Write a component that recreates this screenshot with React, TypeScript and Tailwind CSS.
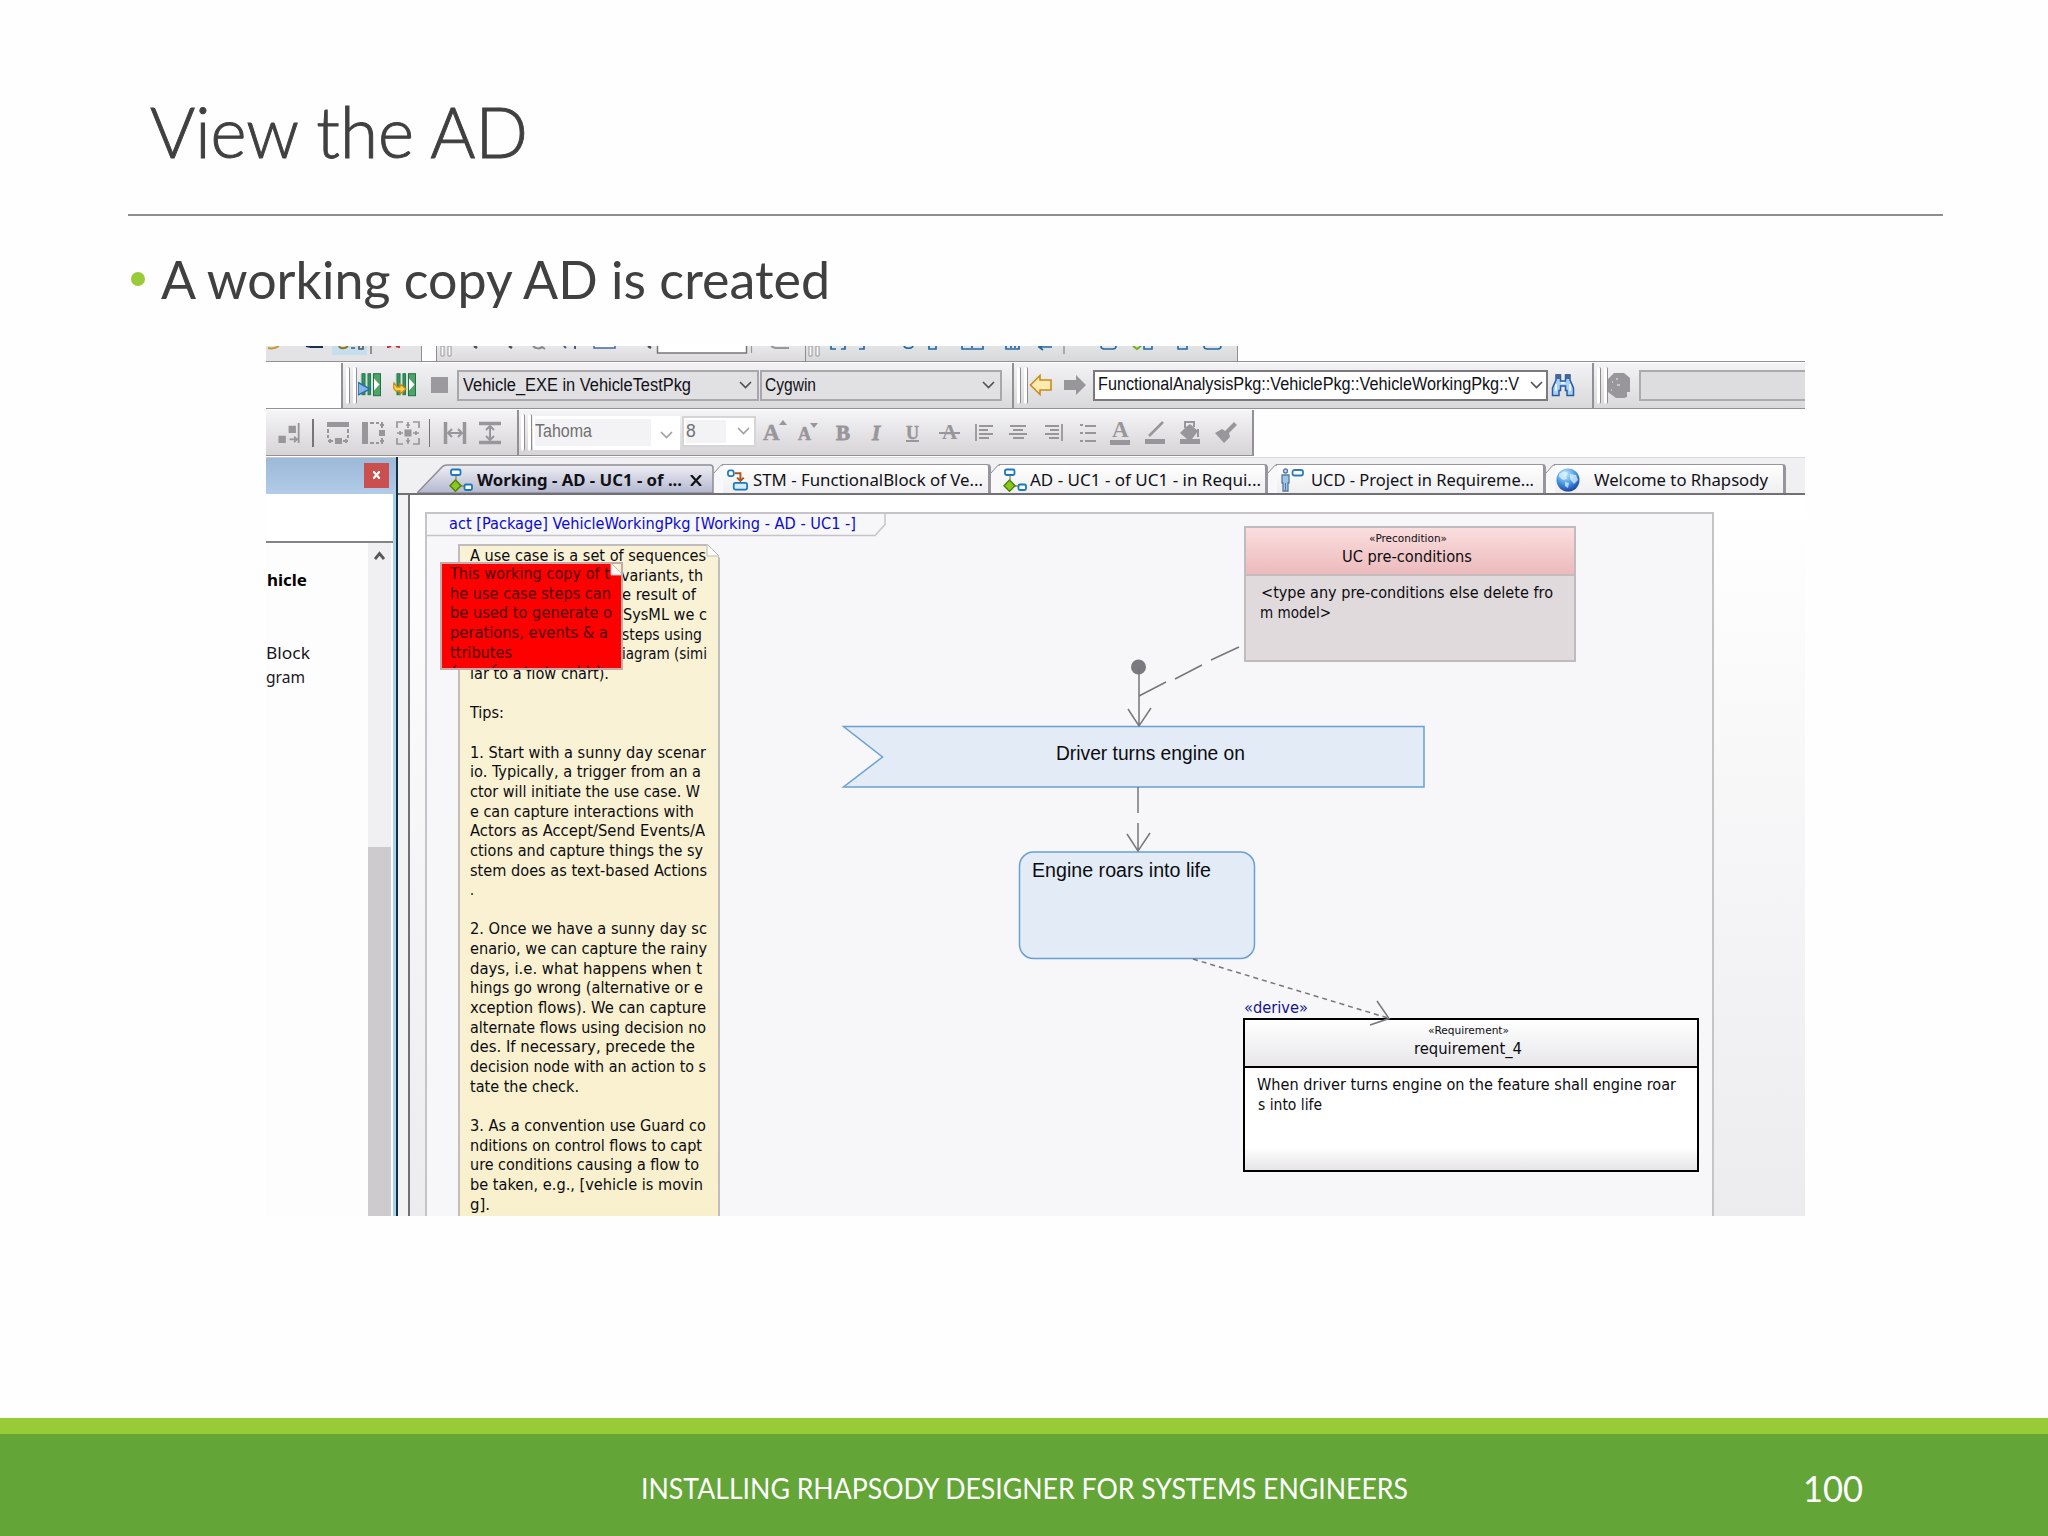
import React, { useLayoutEffect, useRef, useState } from 'react';

type FitProps = { w: number; className?: string; children: string };

// Single line of text stretched to an exact width
function Fit({ w, className = '', children }: FitProps) {
  const ref = useRef<HTMLSpanElement>(null);
  const [scale, setScale] = useState(1);

  useLayoutEffect(() => {
    if (ref.current) setScale(w / parseFloat(getComputedStyle(ref.current).width));
  }, [w, children]);

  return (
    <span
      ref={ref}
      className={`inline-block shrink-0 origin-left whitespace-pre ${className}`}
      style={{ transform: `scaleX(${scale})` }}
    >
      {children}
    </span>
  );
}

const tahoma = 'font-["DejaVu_Sans_Condensed","DejaVu_Sans",sans-serif]';
const segoe = 'font-["Noto_Sans",sans-serif]';
const arial = 'font-["Liberation_Sans",sans-serif]';

function Grip() {
  return (
    <div className="flex h-[37px] w-[12px] shrink-0 gap-[3px]">
      <div className="w-[4px] rounded-sm border-r border-[#8e8c90] bg-white" />
      <div className="w-[4px] rounded-sm border-r border-[#8e8c90] bg-white" />
    </div>
  );
}

function Chevron({ className = 'text-[#505052]' }: { className?: string }) {
  return (
    <svg className={`h-[8px] w-[13px] shrink-0 ${className}`} viewBox="0 0 13 8" fill="none" stroke="currentColor" strokeWidth="1.6">
      <path d="M1 1l5.5 5.5L12 1" />
    </svg>
  );
}

function Icon({ className, box = '0 0 24 24', children }: { className: string; box?: string; children: React.ReactNode }) {
  return (
    <svg className={`shrink-0 text-[#98969a] ${className}`} viewBox={box} fill="none" stroke="currentColor" strokeWidth="2">
      {children}
    </svg>
  );
}

function ActivityIcon({ className }: { className: string }) {
  return (
    <Icon className={className}>
      <path d="M7 7v5M12 18h5" stroke="#8d8b60" strokeWidth="1.3" />
      <rect x="2" y="1.5" width="9.5" height="5.5" rx="1.5" fill="#fff" stroke="#1a78bb" strokeWidth="1.8" />
      <path d="M6.5 12l5.5 5.7-5.5 5.5L1 17.7z" fill="#8cc81c" stroke="#4d8507" strokeWidth="1.5" />
      <rect x="15.5" y="16.5" width="7.5" height="5.5" rx="1.5" fill="#fff" stroke="#1a78bb" strokeWidth="1.8" />
    </Icon>
  );
}

function BuildBars() {
  return (
    <>
      <path d="M2 1h20v21H2z" fill="#cfe6d8" stroke="none" />
      <rect x="4" y=".7" width="3" height="21" fill="#3a8f66" stroke="#2a7a52" strokeWidth="1" />
      <rect x="10" y=".7" width="2.5" height="21" fill="#3a8f66" stroke="#2a7a52" strokeWidth="1" />
      <rect x="15.5" y=".7" width="7" height="22" fill="#4ea365" stroke="#23704a" strokeWidth="1" />
      <path d="M16 5.500l5.500 6-5.500 6z" fill="#fff" stroke="none" />
    </>
  );
}

/* Row cut off by the top edge: only the icon bottoms show */
function CutToolbar() {
  return (
    <div className="flex h-[15px] shrink-0">
      <div className="flex h-full w-[156px] shrink-0 border-r border-[#8e8c90] bg-[#e3e2e4]">
        <Icon className="h-[15px] w-[155px]" box="0 0 155 15">
          <rect x="66" y="-2" width="35" height="11" fill="#c5dff0" stroke="none" />
          <path d="M2 2c4 1 8 0 11-2" stroke="#c59b28" strokeWidth="2" />
          <path d="M40 0l5 1h12" stroke="#16324f" strokeWidth="1.800" />
          <path d="M73 0c1 3 6 3 9 0" stroke="#987118" strokeWidth="2" />
          <path d="M85 2h4m4-2v3h4V0" stroke="#555" strokeWidth="1.600" />
          <path d="M105 0v8" stroke="#77757a" strokeWidth="1.500" />
          <path d="M122 0v2M125 0l-2 1M133 0v2M130 0l2 1" stroke="#cf3438" strokeWidth="2" />
        </Icon>
      </div>
      <div className="ml-[14px] h-full w-[369px] shrink-0 border-l border-[#8e8c90] bg-linear-to-b from-[#e8e7e9] to-[#dcdadd]">
        <Icon className="h-[15px] w-[368px]" box="0 0 368 15">
          <path d="M4 0h3v10H4zM11 0h3v10h-3z" fill="#fff" stroke="#98969a" strokeWidth="1" />
          <path d="M37 0l3 2M72 0l3 2M211 0l3 2" stroke="#4e4d50" strokeWidth="2.500" />
          <path d="M96 0c3 3 7 3 9 1l3 2" stroke="#88868a" />
          <path d="M127 0l2 2M138 0v3" stroke="#44607d" />
          <rect x="157" y="-4" width="21" height="6" fill="#fff" stroke="#4068a8" strokeWidth="1.500" />
          <rect x="220.500" y="-4" width="89" height="11" fill="#fff" stroke="#77757a" strokeWidth="1.500" />
          <path d="M314.500 0v7" strokeWidth="1.200" />
          <path d="M338 2h14M334 0l4 2" />
        </Icon>
      </div>
      <div className="h-full w-[433px] shrink-0 border-x border-[#8e8c90] bg-linear-to-b from-[#e2e4e5] to-[#d6d8da]">
        <Icon className="h-[15px] w-[431px]" box="0 0 431 15">
          <path d="M3 0h3v10H3zM10 0h3v10h-3z" fill="#fff" stroke="#98969a" strokeWidth="1" />
          <g stroke="#2469a3">
            <path d="M25 0v3h5M35 3h4V0M53 3h5V0M98 0c1 3 8 3 9 0M123 0v3h7V0M156 0v3h21V0M166 0v2M200 0v3h13V0M205 0v2M209 0v2M232 1h14m-10-2l-3 2 4 3" strokeWidth="1.700" />
            <path d="M295 0c0 3 2 3 3 3h9c2 0 3-1 3-3M338 0v3h8V0M372 0v3h9V0M398 0c0 3 2 3 3 3h11c2 0 3-1 3-3" strokeWidth="1.600" />
          </g>
          <path d="M327 0l4 3 4-3" stroke="#75ad21" />
          <path d="M258 0v8" strokeWidth="1.500" />
        </Icon>
      </div>
    </div>
  );
}

function BuildToolbar() {
  return (
    <div className="flex h-[48px] shrink-0 border-y-[1.500px] border-[#929094] pt-px">
      <div className={`ml-[75px] flex w-[671px] shrink-0 items-center border-l-2 border-[#929094] bg-linear-to-b from-[#f3f2f4] to-[#d9d8da] pb-px pl-[3px] text-[18px] text-[#111118] ${arial}`}>
        <Grip />
        <Icon className="h-[24px] w-[24px]">
          <BuildBars />
          <path d="M0 9.500l12 6.500-12 6z" fill="#86b6e4" stroke="#286eaa" strokeWidth="1.500" />
        </Icon>
        <Icon className="ml-[11px] h-[24px] w-[24px]">
          <BuildBars />
          <path d="M1 10l3 4h3v-3l6 5-6 5v-3H3c-3-2-3-5-2-8z" fill="#ffd44a" stroke="#cd8b13" strokeWidth="1.300" />
        </Icon>
        <div className="ml-[14px] h-[16px] w-[17px] shrink-0 bg-[#9b999d]" />
        <div className="ml-[9px] flex h-[31px] w-[302px] shrink-0 items-center justify-between border-2 border-[#a9a7ab] bg-[#e1e0e2] pr-[5px] pl-[4px]">
          <Fit w={228}>Vehicle_EXE in VehicleTestPkg</Fit>
          <Chevron />
        </div>
        <div className="ml-px flex h-[31px] w-[242px] shrink-0 items-center justify-between border-2 border-[#a9a7ab] bg-[#e1e0e2] pr-[5px] pl-[3px]">
          <Fit w={51}>Cygwin</Fit>
          <Chevron />
        </div>
      </div>
      <div className={`flex w-[580px] shrink-0 items-center border-l-2 border-[#929094] bg-linear-to-b from-[#f3f2f4] to-[#d9d8da] pb-px pl-[3px] text-[18px] text-[#111118] ${arial}`}>
        <Grip />
        <Icon className="h-[22px] w-[24px]" box="0 0 24 22">
          <path d="M1.500 11L11 1.500V6h11v10H11v4.500z" fill="#ffeab0" stroke="#c98a1c" strokeWidth="1.600" />
        </Icon>
        <Icon className="ml-[10px] h-[22px] w-[24px]" box="0 0 24 22">
          <path d="M23 11L13 1v5H1v10h12v5z" fill="currentColor" stroke="none" />
        </Icon>
        <div className="ml-[6px] flex h-[31px] w-[455px] shrink-0 items-center border-2 border-[#7b797d] bg-white pl-[3px]">
          <div className="h-[29px] w-[432px] shrink-0">
            <Fit w={421}>FunctionalAnalysisPkg::VehiclePkg::VehicleWorkingPkg::V</Fit>
          </div>
          <Chevron />
        </div>
        <Icon className="ml-[3px] h-[24px] w-[24px]">
          <path d="M5 2h4.500v6h5V2H19v5l3.500 8v7.500H16v-5h-1.500V13h-5v4.500H8v5H1.500V15L5 7z" fill="#a9d0f8" stroke="#2b5b9f" strokeWidth="1.500" />
          <path d="M5 1h4.500v5H5zM14.500 1H19v5h-4.500z" fill="#456890" stroke="none" />
          <path d="M5 11v7M19 11v7M10 10h4" stroke="#e8f3ff" />
        </Icon>
      </div>
      <div className="flex w-[213px] shrink-0 items-center border-l-2 border-[#929094] bg-linear-to-b from-[#f3f2f4] to-[#d9d8da] pb-px pl-[3px]">
        <Grip />
        <Icon className="-ml-px h-[25px] w-[22px]" box="0 0 22 25">
          <path d="M6 0h10l6 5v14h-3v5l-3 1H8l-8-6V6z" fill="currentColor" stroke="none" />
          <path d="M8 6h2M4 9h1M9 12h3M3 17h1" stroke="#d6d4d8" strokeWidth="1.500" />
        </Icon>
        <div className="ml-[9px] h-[31px] flex-1 border-2 border-r-0 border-[#acaaae] bg-[#dddcde]" />
      </div>
    </div>
  );
}

function FormatToolbar() {
  return (
    <div className="mt-px flex h-[46px] w-[988px] shrink-0 items-center border-r-2 border-b-[1.500px] border-[#929094] bg-linear-to-b from-[#f5f4f6] to-[#d6d4d7]">
      <Icon className="ml-[12px] h-[22px] w-[23px]">
        <path d="M22 1v22M12 19h9M17 16l3 3-3 3" />
        <path d="M11 4h8v8h-8zM0 15h8v8H0z" fill="currentColor" stroke="none" />
      </Icon>
      <div className="ml-[11px] h-[28px] w-[1.500px] bg-[#77757a]" />
      <Icon className="ml-[12px] h-[24px] w-[24px]">
        <path d="M1 1h22v5H1zM9 17h7v6H9z" fill="currentColor" stroke="none" />
        <path d="M2 8v4M2 14v3M22 8v4M22 14v3M2 20h5M17 20h5M4 18v4M20 18v4" />
      </Icon>
      <Icon className="ml-[11px] h-[24px] w-[24px]">
        <path d="M1 1h6v22H1zM18 9h6v6h-6z" fill="currentColor" stroke="none" />
        <path d="M9 2h4M15 2h3M9 22h4M15 22h3M21 1v6M19 4h4M21 17v6M19 20h4" />
      </Icon>
      <Icon className="ml-[11px] h-[24px] w-[24px]">
        <path d="M8.500 8.500h7v7h-7z" fill="currentColor" stroke="none" />
        <path d="M1 7V1h6M17 1h6v6M1 17v6h6M17 23h6v-6M12 1v6M12 17v6M1 12h6M17 12h6M10 4h4M10 20h4M4 10v4M20 10v4" strokeWidth="1.700" />
      </Icon>
      <div className="ml-[9px] h-[28px] w-[1.500px] bg-[#77757a]" />
      <Icon className="ml-[13px] h-[24px] w-[24px]">
        <path d="M2.500 1v22M21.500 1v22" strokeWidth="3.500" />
        <path d="M5 12h14M9 8l-4 4 4 4M15 8l4 4-4 4" />
      </Icon>
      <Icon className="ml-[11px] h-[24px] w-[24px]">
        <path d="M1 2.500h22M1 21.500h22" strokeWidth="3.500" />
        <path d="M12 5v14M8 9l4-4 4 4M8 15l4 4 4-4" />
      </Icon>
      <div className={`ml-[15px] flex h-full shrink-0 items-center border-l-2 border-[#929094] pl-[2px] text-[17.500px] text-[#717073] ${arial}`}>
        <Grip />
        <div className="flex h-[34px] w-[147px] shrink-0 items-center justify-between border-2 border-white bg-white pr-[5px]">
          <div className="h-[27px] w-[116px] shrink-0 bg-[#f3f2f4] leading-[24px]">
            <Fit w={57}>Tahoma</Fit>
          </div>
          <Chevron className="mt-[5px] text-[#a09ea2]" />
        </div>
        <div className="mb-[3px] ml-[2px] flex h-[31px] w-[74px] shrink-0 items-center justify-between border-2 border-[#d6d4d7] bg-white pr-[4px] pl-[2px]">
          <div className="h-[23px] w-[40px] bg-[#f3f2f4] leading-[23px]">8</div>
          <Chevron className="text-[#a09ea2]" />
        </div>
      </div>
      <div className="ml-[7px] flex shrink-0 items-center font-['Liberation_Serif',serif] leading-none font-bold text-[#98969a]">
        <span className="relative w-[35px] text-[23px] [-webkit-text-stroke:0.5px]">
          A
          <svg className="absolute top-[-1px] left-[16px] h-[5px] w-[8px]" viewBox="0 0 8 5" fill="currentColor"><path d="M4 0l4 5H0z" /></svg>
        </span>
        <span className="relative w-[38px] pt-[2px] text-[18px] [-webkit-text-stroke:0.5px]">
          A
          <svg className="absolute top-0 left-[12px] h-[5px] w-[8px]" viewBox="0 0 8 5" fill="currentColor"><path d="M0 0h8L4 5z" /></svg>
        </span>
        <span className="w-[36px] pt-px text-[21px] [-webkit-text-stroke:0.8px]">B</span>
        <span className="w-[34px] pt-px text-[21px] italic [-webkit-text-stroke:0.8px]">I</span>
        <span className="w-[33px] text-[18px] underline decoration-2 underline-offset-1 [-webkit-text-stroke:0.5px]">U</span>
        <span className="relative w-[36px] pl-[3px] text-[21px]">
          A
          <span className="absolute top-[10px] left-0 h-[2px] w-[21px] bg-[#98969a]" />
        </span>
      </div>
      <Icon className="h-[17px] w-[19px]" box="0 0 19 17">
        <path d="M1 0v17M4 2h14M4 6h9M4 10h14M4 14h10" strokeWidth="1.800" />
      </Icon>
      <Icon className="ml-[15px] h-[17px] w-[18px]" box="0 0 18 17">
        <path d="M1 2h16M4 6h10M0 10h18M4 14h11" strokeWidth="1.800" />
      </Icon>
      <Icon className="ml-[17px] h-[17px] w-[19px]" box="0 0 19 17">
        <path d="M18 0v17M1 2h14M6 6h9M1 10h14M5 14h10" strokeWidth="1.800" />
      </Icon>
      <Icon className="ml-[17px] h-[20px] w-[16px]" box="0 0 16 20">
        <path d="M0 2h3M0 10h3M0 18h3M5 3h11M5 10h11M5 18h11" strokeWidth="1.800" />
      </Icon>
      <span className="ml-[14px] h-[24px] w-[20px] shrink-0 border-b-[5px] border-[#98969a] pl-[2px] font-['Liberation_Serif',serif] text-[23px] leading-[18px] font-bold text-[#98969a]">A</span>
      <Icon className="ml-[15px] h-[23px] w-[20px]" box="0 0 20 23">
        <path d="M0 18h20v5H0z" fill="currentColor" stroke="none" />
        <path d="M4 15L18 1" strokeWidth="2.500" />
      </Icon>
      <Icon className="ml-[15px] h-[23px] w-[21px]" box="0 0 21 23">
        <path d="M0 18h20v5H0zM7 18L0 12l6-6 4-3 8 7-6 8z" fill="currentColor" stroke="none" />
        <path d="M5 7V1h9v5M18 8v8" />
      </Icon>
      <Icon className="ml-[14px] h-[23px] w-[23px]" box="0 0 23 23">
        <path d="M0 12l7-4 3 2 9-9 3 3-8 8 1 4-6 6z" fill="currentColor" stroke="none" />
      </Icon>
    </div>
  );
}

const tabs = [
  { icon: 'state', gap: 'w-[277px]', label: 'STM - FunctionalBlock of Ve...', w: 230, inner: 'pl-[13px]', text: 'ml-[3px]' },
  { icon: 'activity', gap: 'w-[277px]', label: 'AD - UC1 - of UC1 - in Requi...', w: 231, inner: 'pl-[12px]', text: 'ml-[3px]' },
  { icon: 'usecase', gap: 'w-[278px]', label: 'UCD - Project in Requireme...', w: 223, inner: 'pl-[12px]', text: 'ml-[7px]' },
  { icon: 'globe', gap: 'w-[240px]', label: 'Welcome to Rhapsody', w: 174, inner: 'pl-[10px]', text: 'ml-[14px]' },
];

function TabIcon({ name }: { name: string }) {
  if (name === 'activity') return <ActivityIcon className="h-[24px] w-[24px]" />;
  if (name === 'state')
    return (
      <Icon className="h-[24px] w-[23px]">
        <path d="M8 5h6v8M10.500 9.500L14 13l3.500-3.500" stroke="#a9551d" />
        <rect x="1" y="2" width="6" height="6" rx="2" fill="#fff" stroke="#1a78bb" strokeWidth="1.800" />
        <rect x="7" y="15" width="14" height="7" rx="2" fill="#d6ecfb" stroke="#1a78bb" strokeWidth="1.800" />
      </Icon>
    );
  if (name === 'usecase')
    return (
      <Icon className="h-[24px] w-[24px]">
        <circle cx="5.500" cy="3" r="2" fill="#c4ddf2" stroke="#57799c" strokeWidth="1.300" />
        <path d="M2 7h7v8H8v8H3v-8H2z" fill="#9fc6e8" stroke="#57799c" strokeWidth="1.300" />
        <path d="M5.500 15v7" stroke="#57799c" strokeWidth="1" />
        <rect x="12.500" y="2" width="10.500" height="5.500" rx="2" fill="#fff" stroke="#3179bb" strokeWidth="1.800" />
      </Icon>
    );
  return (
    <Icon className="h-[24px] w-[24px]">
      <defs>
        <radialGradient id="globe" cx=".4" cy=".25" r=".8">
          <stop offset="0" stopColor="#c5eafc" />
          <stop offset=".5" stopColor="#4f9fe2" />
          <stop offset="1" stopColor="#1238a3" />
        </radialGradient>
      </defs>
      <circle cx="12" cy="12" r="11.500" fill="url(#globe)" stroke="none" />
      <path d="M3 6l5-3 4 2-2 3 1 3-4 1-4-3zM14 6l6 1 2 5-4 4-4-5zM9 14l4 1-1 5-3-2z" fill="#e4f5fd" fillOpacity=".7" stroke="none" />
    </Icon>
  );
}

function TabBar() {
  return (
    <div className={`flex h-[38px] shrink-0 items-end border-t-[1.500px] border-b-2 border-t-[#d9d8da] border-b-[#717075] bg-[#f0eff1] pl-[19px] text-[16px] text-[#111118] ${segoe}`}>
      <div className="relative flex h-[29px] w-[297px] shrink-0 items-center pt-[3px] pl-[32px] font-bold">
        <svg className="absolute inset-0 h-[29px] w-[297px]" viewBox="0 0 297 29">
          <defs>
            <linearGradient id="active" x1="0" y1="0" x2="0" y2="1">
              <stop offset="0" stopColor="#eeeef4" />
              <stop offset="1" stopColor="#b4b8cf" />
            </linearGradient>
          </defs>
          <path d="M0 29L25 3q2-2 5-2h263q3 0 3 3v25z" fill="url(#active)" stroke="#8e8c94" strokeWidth="1.500" />
        </svg>
        <span className="relative flex items-center">
          <ActivityIcon className="h-[24px] w-[24px]" />
          <span className="ml-[4px] w-[213px]"><Fit w={205}>Working - AD - UC1 - of ...</Fit></span>
          <Icon className="h-[11px] w-[12px]" box="0 0 12 11"><path d="M1 0l10 11M11 0L1 11" stroke="#111" strokeWidth="2.200" /></Icon>
        </span>
      </div>
      {tabs.map((tab) => (
        <div key={tab.label} className={`relative flex h-[29px] shrink-0 items-center pt-[3px] ${tab.gap} ${tab.inner}`}>
          <div className="absolute top-0 right-0 bottom-0 left-[8px] rounded-tr-[4px] border-t-[1.500px] border-r-[3px] border-[#98969c] bg-linear-to-b from-white to-[#efeef0]" />
          <svg className="absolute top-0 left-0 h-[29px] w-[9px]" viewBox="0 0 9 29">
            <path d="M0 29V9L7 1h2v28z" fill="#f8f7f9" />
            <path d="M0 9L7 1.200h2" fill="none" stroke="#8e8c94" />
          </svg>
          <span className="relative flex items-center">
            <TabIcon name={tab.icon} />
            <span className={tab.text}><Fit w={tab.w}>{tab.label}</Fit></span>
          </span>
        </div>
      ))}
    </div>
  );
}

function BrowserPanel() {
  return (
    <div className="flex w-[132px] shrink-0 flex-col border-r-2 border-[#17303f] bg-[#a5d3ee]">
      <div className="flex h-[37px] shrink-0 items-center justify-end border-t border-[#c9c7cb] bg-linear-to-b from-[#9db9d8] to-[#b1cbe8] pr-[7px] pb-[2px]">
        <div className="flex h-[25px] w-[25px] items-center justify-center bg-[#c9504f]">
          <svg className="h-[8px] w-[7px]" viewBox="0 0 8 9" stroke="#fff" strokeWidth="2.500"><path d="M0 0l8 9M8 0L0 9" /></svg>
        </div>
      </div>
      <div className="mr-[3px] h-[49px] shrink-0 border-b-2 border-[#858387] bg-white" />
      <div className="mr-[3px] flex flex-1 bg-[#fdfdfe]">
        <div className={`w-[102px] shrink-0 text-[16.500px] leading-[24px] text-[#18181c] ${segoe}`}>
          <div className="mt-[25px] h-[73px] pl-px font-bold text-black"><Fit w={40}>hicle</Fit></div>
          <div className="h-[24px]"><Fit w={44}>Block</Fit></div>
          <div className="h-[24px]"><Fit w={39}>gram</Fit></div>
        </div>
        <div className="flex w-[23px] flex-col items-center bg-[#f0eff1] pt-[8px]">
          <svg className="h-[10px] w-[11px]" viewBox="0 0 11 10" fill="none" stroke="#58565a" strokeWidth="2.800"><path d="M1 8l4.500-5.500L10 8" /></svg>
          <div className="mt-[286px] w-full flex-1 bg-[#cdcbce]" />
        </div>
      </div>
    </div>
  );
}

const noteLines: [string, number][] = [
  ['lar to a flow chart).', 139],
  ['', 0],
  ['Tips:', 34],
  ['', 0],
  ['1. Start with a sunny day scenar', 236],
  ['io. Typically, a trigger from an a', 231],
  ['ctor will initiate the use case. W', 230],
  ['e can capture interactions with', 224],
  ['Actors as Accept/Send Events/A', 235],
  ['ctions and capture things the sy', 233],
  ['stem does as text-based Actions', 237],
  ['.', 4],
  ['', 0],
  ['2. Once we have a sunny day sc', 237],
  ['enario, we can capture the rainy', 237],
  ['days, i.e. what happens when t', 232],
  ['hings go wrong (alternative or e', 233],
  ['xception flows). We can capture', 236],
  ['alternate flows using decision no', 236],
  ['des. If necessary, precede the', 225],
  ['decision node with an action to s', 236],
  ['tate the check.', 109],
  ['', 0],
  ['3. As a convention use Guard co', 236],
  ['nditions on control flows to capt', 232],
  ['ure conditions causing a flow to', 229],
  ['be taken, e.g., [vehicle is movin', 233],
  ['g].', 20],
];

const hiddenStarts: [string, number, string][] = [
  ['variants, th', 82, 'pl-[151px]'],
  ['e result of', 74, 'pl-[152px]'],
  ['SysML we c', 84, 'pl-[153px]'],
  ['steps using', 80, 'pl-[152px]'],
  ['iagram (simi', 85, 'pl-[152px]'],
];

const redLines: [string, number][] = [
  ['This working copy of t', 160],
  ['he use case steps can', 161],
  ['be used to generate o', 162],
  ['perations, events & a', 158],
  ['ttributes', 62],
];

function Notes() {
  return (
    <>
      <div className="absolute top-[49px] left-[48px] h-[680px] w-[262px] border-2 border-[#c0bdbc] bg-linear-to-b from-[#faf2d6] to-[#f8f0cd] pl-[10px] leading-[19px]">
        <div className="h-[19.670px]"><Fit w={236}>A use case is a set of sequences</Fit></div>
        {hiddenStarts.map(([text, w, pad]) => (
          <div key={text} className={`h-[19.670px] ${pad}`}><Fit w={w}>{text}</Fit></div>
        ))}
        {noteLines.map(([text, w], i) => (
          <div key={i} className="h-[19.670px]">{text && <Fit w={w}>{text}</Fit>}</div>
        ))}
        <svg className="absolute -top-[2px] -right-[2px] h-[14px] w-[14px]" viewBox="0 0 14 14">
          <path d="M0 0h14v14z" fill="#f7f6f8" />
          <path d="M1 0v12h12z" fill="#fffefa" stroke="#bbb8b8" />
        </svg>
      </div>
      <div className="absolute top-[67px] left-[30px] h-[108px] w-[183px] overflow-hidden border-2 border-[#c9a9a6] bg-[#fe0000] pl-[8px] leading-[19px] text-[#4a0303]">
        <div>
          {redLines.map(([text, w]) => (
            <div key={text} className="h-[19.670px]"><Fit w={w}>{text}</Fit></div>
          ))}
        </div>
        <svg className="absolute bottom-0 left-[8px] h-[4px] w-[164px]" viewBox="0 0 164 4" fill="none" stroke="#560303" strokeWidth="1.500">
          <path d="M4 4l2-3M43 4q1-3 4-3M76 2v2M97 2v2M129 1v3M138 1v3M148 1l1 3" />
        </svg>
        <svg className="absolute -top-[2px] -right-[2px] h-[14px] w-[13px]" viewBox="0 0 13 14">
          <path d="M0 0h13v14z" fill="#faf2d6" />
          <path d="M1 1v12h12z" fill="#fff8f4" stroke="#d9b9b5" />
        </svg>
      </div>
    </>
  );
}

function Diagram() {
  return (
    <div className={`relative flex-1 overflow-hidden border-l-2 border-[#717075] bg-linear-to-b from-white to-[#ecebee] text-[16.500px] leading-[20px] text-[#0c0c10] ${tahoma}`}>
      <div className="absolute top-[17px] left-[15px] h-[710px] w-[1289px] border-2 border-[#c6c4c7] bg-[#f7f6f9]" />
      <div className="absolute top-[19px] left-[39px] leading-[20px] text-[#0b0bd0]">
        <Fit w={407}>act [Package] VehicleWorkingPkg [Working - AD - UC1 -]</Fit>
      </div>
      <Notes />

      {/* Precondition */}
      <div className="absolute top-[31px] left-[834px] h-[136px] w-[332px] border-2 border-[#c0bcbe] bg-[#e1dadc]">
        <div className="flex h-[48px] flex-col border-b-2 border-[#c6bcbe] bg-linear-to-b from-[#fbdede] to-[#ebbabc]">
          <div className="mt-[4px] h-[15px] pl-[123px] text-[11px] leading-[14px]"><Fit w={78}>«Precondition»</Fit></div>
          <div className="pl-[96px]"><Fit w={130}>UC pre-conditions</Fit></div>
        </div>
        <div className="mt-[7px] h-[20px] pl-[15px]"><Fit w={292}>{'<type any pre-conditions else delete fro'}</Fit></div>
        <div className="pl-[14px]"><Fit w={71}>{'m model>'}</Fit></div>
      </div>

      {/* Requirement */}
      <div className="absolute top-[523px] left-[833px] h-[154px] w-[456px] border-2 border-black bg-linear-to-b from-white from-85% to-[#e6e4e7]">
        <div className="h-[48px] border-b-2 border-black bg-linear-to-b from-white to-[#e8e6e9]">
          <div className="h-[19px] pt-[4px] pl-[183px] text-[11px] leading-[14px]"><Fit w={81}>«Requirement»</Fit></div>
          <div className="pl-[169px]"><Fit w={108}>requirement_4</Fit></div>
        </div>
        <div className="mt-[7px] h-[20px] pl-[12px]"><Fit w={419}>When driver turns engine on the feature shall engine roar</Fit></div>
        <div className="pl-[13px]"><Fit w={64}>s into life</Fit></div>
      </div>

      <svg className="absolute inset-0 h-[721px] w-[1395px]" viewBox="410 495 1395 721" fill="none" stroke="#77767a" strokeWidth="1.500">
        <path d="M426 535.500h449l10-11V513" stroke="#c6c4c7" />
        <path d="M843.500 726.500H1424V787H843.500L882.500 757z" fill="#e2ebf6" stroke="#6aa0d2" />
        <rect x="1019.500" y="852" width="235" height="106.500" rx="14" fill="#e2ebf6" stroke="#6aa0d2" />
        <circle cx="1138.500" cy="667" r="7.500" fill="#7b7a7e" stroke="none" />
        <path d="M1139 667v59M1128 709l11 17 12-18" />
        <path d="M1139 696l27-14M1175 679l27-14M1211 660l28-13" />
        <path d="M1138 787v26M1138 823v28M1127 834l11 17 12-18" />
        <path d="M1193 959L1388 1018" strokeDasharray="5 4" />
        <path d="M1377 1001l12 17.500-19 6.500" />
      </svg>
      <div className={`absolute top-[246px] left-[646px] text-[20px] leading-[24px] ${arial}`}><Fit w={189}>Driver turns engine on</Fit></div>
      <div className={`absolute top-[363px] left-[622px] text-[20px] leading-[24px] ${arial}`}><Fit w={179}>Engine roars into life</Fit></div>
      <div className="absolute top-[503px] left-[834px] text-[#14148c]"><Fit w={64}>«derive»</Fit></div>
    </div>
  );
}

export default function App() {
  return (
    <main className="flex h-[1536px] w-[2048px] flex-col overflow-hidden bg-[#fefefe] font-['Lato',sans-serif] text-[#404040]">
      <header className="mr-[105px] ml-[128px] flex h-[216px] shrink-0 items-start border-b-2 border-[#8e8e8e] pt-[89px] pl-[22px]">
        <h1 className="text-[71px] leading-[84px] font-light [-webkit-text-stroke:1px_#404040]">
          <Fit w={378}>View the AD</Fit>
        </h1>
      </header>

      <div className="flex h-[130px] shrink-0 items-start pt-[32px] pl-[131px] text-[51.500px] leading-[62px]">
        <span className="mt-[24px] mr-[16px] h-[14px] w-[14px] rounded-full bg-[#99cb38]" />
        <Fit w={669}>A working copy AD is created</Fit>
      </div>

      {/* Rhapsody window */}
      <div className="ml-[266px] flex h-[870px] w-[1539px] shrink-0 flex-col overflow-hidden bg-[#fefefe]">
        <CutToolbar />
        <BuildToolbar />
        <FormatToolbar />
        <div className="mt-px flex flex-1">
          <BrowserPanel />
          <div className="flex w-[1407px] shrink-0 flex-col bg-[#f3f3f4]">
            <TabBar />
            <div className="ml-[10px] flex flex-1">
              <Diagram />
            </div>
          </div>
        </div>
      </div>

      <footer className="mt-auto flex h-[118px] shrink-0 items-center border-t-[16px] border-[#99cb38] bg-[#63a537] pt-[6px] pl-[641px] text-[28px] text-white">
        <div className="w-[1162px]"><Fit w={767}>INSTALLING RHAPSODY DESIGNER FOR SYSTEMS ENGINEERS</Fit></div>
        <div className="text-[36px]"><Fit w={60}>100</Fit></div>
      </footer>
    </main>
  );
}
